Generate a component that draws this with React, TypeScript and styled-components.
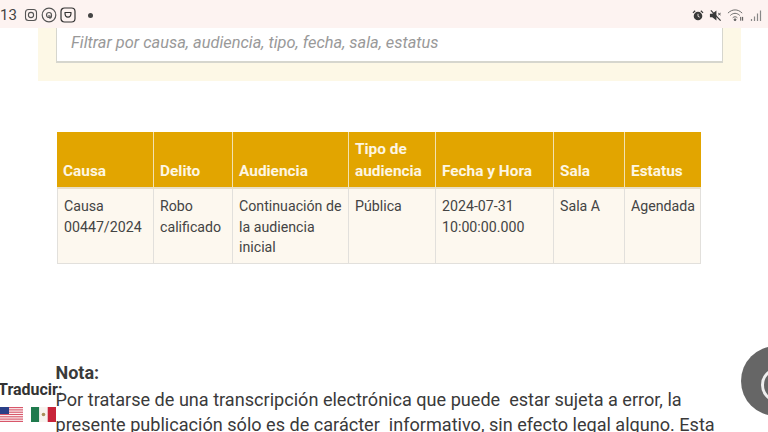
import React, {FC} from 'react';
import styled, {createGlobalStyle} from 'styled-components';

const GlobalStyle = createGlobalStyle`
  html, body {
    margin: 0;
    padding: 0;
    background: #fff;
  }
  body {
    font-family: Roboto, "Liberation Sans", sans-serif;
    color: #3a3a3a;
  }
`

const columns = [
    {title: 'Causa', width: 97, cell: <>Causa<br/>00447/2024</>},
    {title: 'Delito', width: 79, cell: <>Robo<br/>calificado</>},
    {title: 'Audiencia', width: 116, cell: <>Continuación de<br/>la audiencia<br/>inicial</>},
    {title: <>Tipo de<br/>audiencia</>, width: 87, cell: 'Pública'},
    {title: 'Fecha y Hora', width: 118, cell: <>2024-07-31<br/>10:00:00.000</>},
    {title: 'Sala', width: 71, cell: 'Sala A'},
    {title: 'Estatus', width: 76, cell: 'Agendada'},
];

const InstagramIcon: FC = () => (
    <svg width="14" height="14" viewBox="0 0 14 14" fill="none" stroke="#555" strokeWidth="1.1">
        <rect x="1.5" y="1.5" width="11" height="11" rx="3"/>
        <circle cx="7" cy="7" r="2.6"/>
    </svg>
);

const ThreadsIcon: FC = () => (
    <svg width="16" height="16" viewBox="0 0 16 16" fill="none" stroke="#555" strokeWidth="1.2">
        <circle cx="8" cy="8" r="6.8"/>
        <path d="M10.500 8c0 2-.5 3.200-1.500 3.200-1 0-1-1-1-3.200"/>
        <circle cx="8" cy="8" r="2.500"/>
    </svg>
);

const StoryIcon: FC = () => (
    <svg width="16" height="16" viewBox="0 0 16 16" fill="none" stroke="#333" strokeWidth="1.200">
        <rect x="1" y="1" width="14" height="14" rx="3.500"/>
        <path d="M4.500 5.500h7M5 6c0 5.500 6 5.500 6 0"/>
    </svg>
);

const AlarmIcon: FC = () => (
    <svg width="12" height="13" viewBox="0 0 14 14" fill="#3a3a3a">
        <circle cx="7" cy="7.600" r="5"/>
        <path d="M0.600 3.400 3.200 1l1 1-2.600 2.400zM13.400 3.400 10.800 1l-1 1 2.600 2.400z"/>
        <path d="M7 5v3l2 1" stroke="#fdf3f1" strokeWidth="1" fill="none"/>
    </svg>
);

const MuteIcon: FC = () => (
    <svg width="13" height="13" viewBox="0 0 14 14" fill="#3a3a3a">
        <path d="M1 5h2.500L8 1.500v11L3.500 9H1z"/>
        <path d="M2 1.500 12.500 12.500" stroke="#3a3a3a" strokeWidth="1.300"/>
        <path d="M10 4.500l2.500 2M12.500 4.500l-2.500 2" stroke="#3a3a3a" strokeWidth="1"/>
    </svg>
);

const WifiIcon: FC = () => (
    <svg width="18" height="14" viewBox="0 0 19 14" fill="none" stroke="#666" strokeWidth="1">
        <path d="M1 5c4.500-4.500 10.500-4.500 15 0M3.500 7.500c3-3 7-3 10 0M6 10c1.500-1.500 3.500-1.500 5 0"/>
        <circle cx="8.500" cy="12" r="1" fill="#666"/>
        <path d="M14.500 9v4M16.500 9v4" stroke="#444"/>
    </svg>
);

const SignalIcon: FC = () => (
    <svg width="12" height="14" viewBox="0 0 12 14" stroke="#888" strokeWidth="1.200">
        <path d="M1.500 13v-2M4.500 13V8.500M7.500 13V5.500M10.500 13V2.500"/>
    </svg>
);

const UsFlag: FC = () => (
    <svg width="24" height="15" viewBox="0 0 24 15">
        <rect width="24" height="15" fill="#fff"/>
        {[0, 2.300, 4.600, 6.900, 9.200, 11.500, 13.800].map(y => (
            <rect key={y} y={y} width="24" height="1.200" fill="#d8576a"/>
        ))}
        <rect width="10" height="7" fill="#2b3f87"/>
    </svg>
);

const MxFlag: FC = () => (
    <svg width="25" height="15" viewBox="0 0 25 15">
        <rect width="8.300" height="15" fill="#1f7a4d"/>
        <rect x="8.300" width="8.400" height="15" fill="#f7f3ee"/>
        <rect x="16.700" width="8.300" height="15" fill="#c8243a"/>
        <circle cx="12.500" cy="7.500" r="1.800" fill="#a8905a"/>
    </svg>
);

export default function App() {
    return (
        <Page>
            <GlobalStyle/>
            <StatusBar>
                <StatusGroup>
                    <Clock>13</Clock>
                    <InstagramIcon/>
                    <ThreadsIcon/>
                    <StoryIcon/>
                    <Dot/>
                </StatusGroup>
                <StatusIcons>
                    <AlarmIcon/>
                    <MuteIcon/>
                    <WifiIcon/>
                    <SignalIcon/>
                </StatusIcons>
            </StatusBar>
            <FilterPanel>
                <FilterInput placeholder="Filtrar por causa, audiencia, tipo, fecha, sala, estatus"/>
            </FilterPanel>
            <Table>
                <colgroup>
                    {columns.map((c, i) => <col key={i} width={c.width}/>)}
                </colgroup>
                <thead>
                    <tr>
                        {columns.map((c, i) => <HeadCell key={i}>{c.title}</HeadCell>)}
                    </tr>
                </thead>
                <tbody>
                    <tr>
                        {columns.map((c, i) => <BodyCell key={i}>{c.cell}</BodyCell>)}
                    </tr>
                </tbody>
            </Table>
            <Note>
                <NoteTitle>Nota:</NoteTitle>
                <NoteText>
                    Por tratarse de una transcripción electrónica que puede  estar sujeta a error, la{'\n'}
                    presente publicación sólo es de carácter  informativo, sin efecto legal alguno. Esta
                </NoteText>
            </Note>
            <Translate>
                <TranslateLabel>Traducir:</TranslateLabel>
                <Flags>
                    <UsFlag/>
                    <MxFlag/>
                </Flags>
            </Translate>
            <FloatingButton>
                <FloatingRing/>
            </FloatingButton>
        </Page>
    );
}

const Page = styled.div`
  position: relative;
  width: 768px;
  height: 432px;
  overflow: hidden;
  background: #fff;
`

const StatusBar = styled.div`
  height: 28px;
  box-sizing: border-box;
  padding: 2px 6px 0 0;
  display: flex;
  align-items: center;
  justify-content: space-between;
  background: #fdf3f1;
`

const StatusGroup = styled.div`
  display: flex;
  align-items: center;
  gap: 3px;
`

const StatusIcons = styled(StatusGroup)`
  gap: 5px;
`

const Clock = styled.span`
  font-size: 15px;
  color: #444;
  margin-right: 4px;
`

const Dot = styled.span`
  width: 5px;
  height: 5px;
  margin-left: 9px;
  border-radius: 50%;
  background: #444;
`

const FilterPanel = styled.div`
  width: 703px;
  height: 53px;
  margin-left: 38px;
  box-sizing: border-box;
  padding: 0 18px;
  background: #fdf8e6;
`

const FilterInput = styled.input`
  display: block;
  width: 667px;
  height: 35px;
  box-sizing: border-box;
  padding: 0 14px 4px 14px;
  border: 1px solid #d6d6ce;
  border-bottom-width: 2px;
  border-top: 0;
  border-radius: 0;
  outline: none;
  background: #fff;
  font-family: Roboto, sans-serif;
  font-size: 16.4px;
  font-style: italic;

  &::placeholder {
    color: #999;
    opacity: 1;
  }
`

const Table = styled.table`
  width: 644px;
  margin: 51px 0 0 57px;
  table-layout: fixed;
  border-collapse: separate;
  border-spacing: 0;
  font-size: 14.2px;
  line-height: 20.5px;
`

const HeadCell = styled.th`
  height: 57px;
  box-sizing: border-box;
  padding: 6px 0 5px 6px;
  border-right: 1px solid #f3e2b0;
  border-bottom: 2px solid #e8dfc8;
  background: #e2a500;
  color: #fdf6e3;
  font-size: 15.4px;
  line-height: 22px;
  font-weight: 700;
  text-align: left;
  vertical-align: bottom;

  &:last-child {
    border-right: 0;
  }
`

const BodyCell = styled.td`
  height: 75px;
  box-sizing: border-box;
  padding: 7px 0 5px 6px;
  border-right: 1px solid #e2e0dc;
  border-bottom: 1px solid #e2e0dc;
  background: #fdf8ef;
  color: #444;
  vertical-align: top;

  &:first-child {
    border-left: 1px solid #e2e0dc;
  }
`

const Note = styled.div`
  margin: 98px 0 0 55.5px;
  color: #3a3a3a;
`

const NoteTitle = styled.div`
  font-size: 18px;
  font-weight: 700;
  line-height: 22px;
`

const NoteText = styled.p`
  margin: 3px 0 0;
  font-size: 18.1px;
  line-height: 25px;
  white-space: pre-wrap;
`

const Translate = styled.div`
  position: absolute;
  left: -2px;
  top: 381px;
`

const TranslateLabel = styled.div`
  font-size: 16px;
  font-weight: 700;
  line-height: 18px;
  color: #333;
`

const Flags = styled.div`
  display: flex;
  gap: 8px;
  margin-top: 8px;
  margin-left: 1px;
`

const FloatingButton = styled.div`
  position: absolute;
  left: 741px;
  top: 346px;
  width: 70px;
  height: 70px;
  border-radius: 50%;
  background: #666;
`

const FloatingRing = styled.div`
  position: absolute;
  left: 20px;
  top: 23px;
  width: 22px;
  height: 26px;
  border: 3px solid #eee;
  border-radius: 50%;
`
